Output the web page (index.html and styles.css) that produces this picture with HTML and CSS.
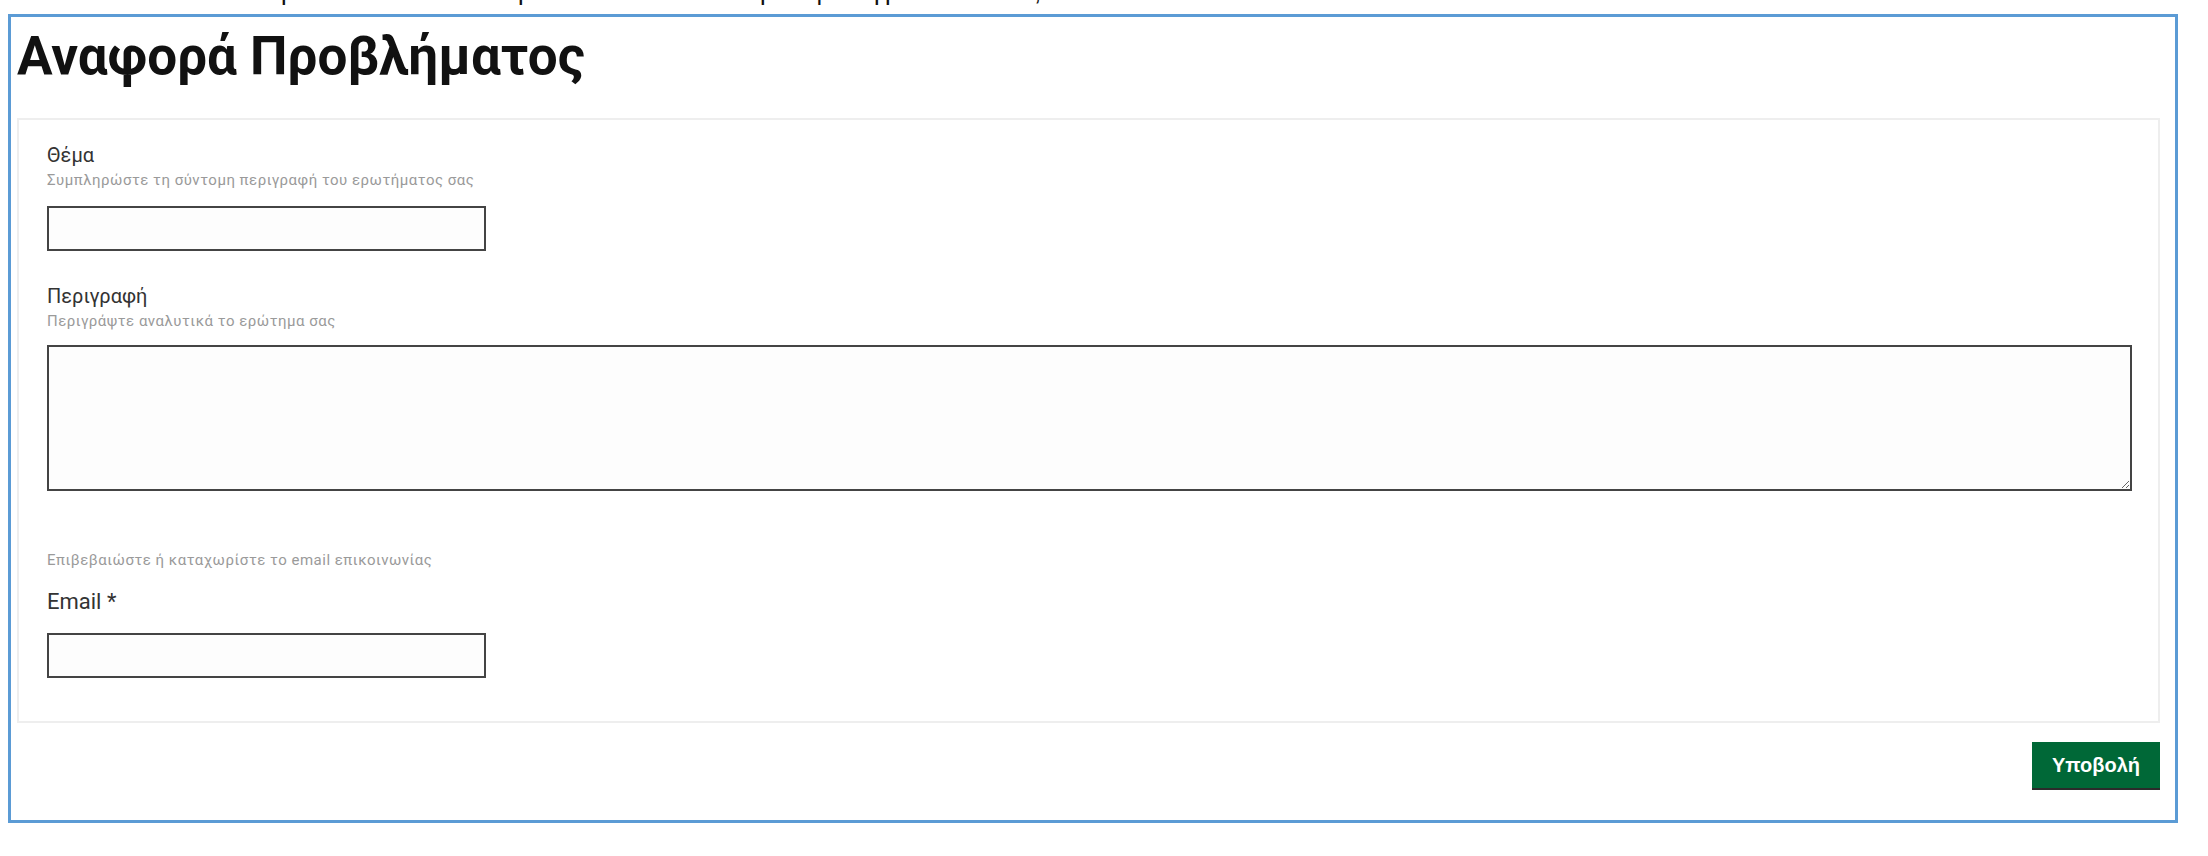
FILE: index.html
```html
<!DOCTYPE html>
<html lang="el">

<head>
    <meta charset="UTF-8">
    <meta name="viewport" content="width=device-width, initial-scale=1.0">
    <title>Αναφορά Προβλήματος</title>
    <link rel="stylesheet" href="styles.css">
</head>

<body>

    <!-- bottom of the previous line of the document, cut off by the screenshot -->
    <div class="prev-line">
        <span class="tick" style="margin-left: 281px; width: 237px">ρ</span>
        <span class="tick" style="width: 242px">ρ</span>
        <span class="tick" style="width: 51px">ρ</span>
        <span class="tick" style="width: 63px">φ</span>
        <span class="tick" style="width: 11px">ρ</span>
        <span class="tick" style="width: 149px">ρ</span>
        <span class="tick">,</span>
    </div>

    <div class="frame">
        <h2 class="page-title">Αναφορά Προβλήματος</h2>

        <form class="panel" onsubmit="return false">
            <label class="label" for="subject">Θέμα</label>
            <div class="help">Συμπληρώστε τη σύντομη περιγραφή του ερωτήματος σας</div>
            <input class="field" type="text" id="subject">

            <label class="label label-gap" for="description">Περιγραφή</label>
            <div class="help">Περιγράψτε αναλυτικά το ερώτημα σας</div>
            <textarea class="area" id="description"></textarea>

            <div class="help help-email">Επιβεβαιώστε ή καταχωρίστε το email επικοινωνίας</div>
            <label class="label label-email" for="email">Email *</label>
            <input class="field" type="email" id="email">
        </form>

        <div class="actions">
            <button class="submit-btn" type="button">Υποβολή</button>
        </div>
    </div>

</body>

</html>
```

FILE: styles.css
```css
body {
    margin: 0;
    background: white;
    font-family: Roboto, "Noto Sans", sans-serif;
}

.prev-line {
    display: flex;
    height: 7px;
    overflow: hidden;
    font-family: "Liberation Sans", Arial, sans-serif;
    font-size: 26px;
    line-height: 30px;
    color: #111;
}

.tick {
    flex: none;
    margin-top: -24px;
}

.frame {
    box-sizing: border-box;
    width: 2170px;
    margin: 7px 0 0 8px;
    border: 3px solid #5b9bd5;
    padding: 9px 15px 30px 6px;
}

.page-title {
    margin: 0;
    font-size: 53px;
    line-height: 61px;
    font-weight: 700;
    color: #111;
}

.panel {
    display: flex;
    flex-direction: column;
    align-items: flex-start;
    margin-top: 31px;
    border: 2px solid #eeeeee;
    padding: 23px 26px 43px 28px;
}

.label {
    font-size: 20px;
    line-height: 24px;
    color: #333;
}

.label-gap {
    margin-top: 33px;
}

.label-email {
    font-size: 22px;
    line-height: 26px;
    margin-top: 21px;
}

.help {
    margin-top: 5px;
    font-size: 15px;
    line-height: 16px;
    letter-spacing: 0.5px;
    color: #9a9a9a;
}

.help-email {
    margin-top: 61px;
}

.field {
    box-sizing: border-box;
    width: 439px;
    height: 45px;
    margin-top: 18px;
    border: 2px solid #444;
    background: #fdfdfd;
    padding: 0 8px;
    font-size: 16px;
    outline: none;
}

.area {
    box-sizing: border-box;
    align-self: stretch;
    height: 146px;
    margin-top: 16px;
    border: 2px solid #444;
    background: #fdfdfd;
    font-size: 16px;
    outline: none;
}

.actions {
    display: flex;
    justify-content: flex-end;
    margin-top: 19px;
}

.submit-btn {
    box-sizing: border-box;
    width: 128px;
    height: 48px;
    background: #006837;
    color: white;
    border: none;
    border-bottom: 2px solid #2b2b2b;
    font-family: "Liberation Sans", Arial, sans-serif;
    font-size: 20px;
    font-weight: bold;
    cursor: pointer;
}
```
